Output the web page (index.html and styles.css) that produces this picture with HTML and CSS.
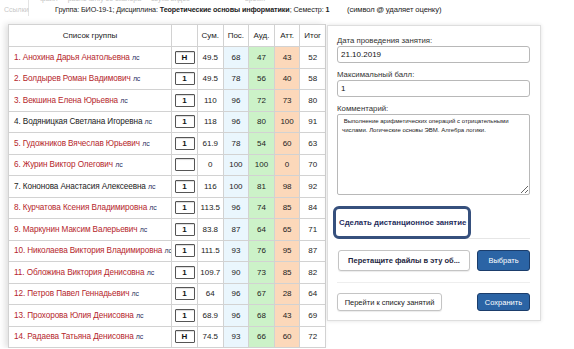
FILE: index.html
```html
<!DOCTYPE html>
<html lang="ru">

<head>
  <meta charset="UTF-8">
  <title>Журнал занятия</title>
  <link rel="stylesheet" href="styles.css">
</head>

<body>
  <div class="topbar">
    <div class="ribbon-group">Ссылки</div>
    <div class="ribbon-faded">
      <span>файл</span><span>распечатку со сканера</span><span>звука видео</span><span class="far">время</span>
    </div>
    <div class="info">
      Группа: БИО-19-1; Дисциплина: <b>Теоретические основы информатики</b>; Семестр: <b>1</b>
    </div>
    <div class="hint">(символ <b>@</b> удаляет оценку)</div>
  </div>

  <div class="main">
    <table class="journal">
      <thead>
        <tr>
          <th class="name-col">Список группы</th>
          <th class="mark-col"></th>
          <th>Сум.</th>
          <th>Пос.</th>
          <th>Ауд.</th>
          <th>Атт.</th>
          <th>Итог</th>
        </tr>
      </thead>
      <tbody id="rows"></tbody>
    </table>

    <div class="lesson-box">
      <label>Дата проведения занятия:</label>
      <input type="text" value="21.10.2019">

      <label>Максимальный балл:</label>
      <input type="text" value="1">

      <label>Комментарий:</label>
      <textarea> Выполнение арифметических операций с отрицательными числами. Логические основы ЭВМ. Алгебра логики.</textarea>

      <div class="remote-wrap">
        <button class="btn-remote">Сделать дистанционное занятие</button>
      </div>

      <div class="file-row">
        <button class="btn-plain btn-drop">Перетащите файлы в эту об...</button>
        <button class="btn-blue">Выбрать</button>
      </div>

      <div class="save-row">
        <button class="btn-plain btn-back">Перейти к списку занятий</button>
        <button class="btn-blue">Сохранить</button>
      </div>
    </div>
  </div>

  <script>
    const students = [
      ['1. Анохина Дарья Анатольевна', 'Н', '49.5', 68, 47, 43, 52, true],
      ['2. Болдырев Роман Вадимович', '1', '49.5', 78, 56, 40, 58, true],
      ['3. Векшина Елена Юрьевна', '1', '110', 96, 72, 73, 80, true],
      ['4. Водяницкая Светлана Игоревна', '1', '118', 96, 80, 100, 91, false],
      ['5. Гудожников Вячеслав Юрьевич', '1', '61.9', 78, 54, 60, 63, true],
      ['6. Журин Виктор Олегович', '', '0', 100, 100, 0, 70, true],
      ['7. Кононова Анастасия Алексеевна', '1', '116', 100, 81, 98, 92, false],
      ['8. Курчатова Ксения Владимировна', '1', '113.5', 96, 74, 85, 84, true],
      ['9. Маркунин Максим Валерьевич', '1', '83.8', 87, 64, 65, 71, true],
      ['10. Николаева Виктория Владимировна', '1', '111.5', 93, 76, 95, 87, true],
      ['11. Обложина Виктория Денисовна', '1', '109.7', 90, 73, 85, 82, true],
      ['12. Петров Павел Геннадьевич', '1', '64', 96, 67, 28, 64, true],
      ['13. Прохорова Юлия Денисовна', '1', '68.9', 96, 68, 43, 69, true],
      ['14. Радаева Татьяна Денисовна', 'Н', '74.5', 93, 66, 60, 72, true]
    ];

    const tbody = document.getElementById('rows');
    students.forEach(s => {
      const tr = document.createElement('tr');
      tr.innerHTML = `
        <td class="name-col ${s[7] ? 'red' : ''}">${s[0]} <span class="ls">лс</span></td>
        <td class="mark-col"><span class="mark">${s[1]}</span></td>
        <td>${s[2]}</td>
        <td class="pos">${s[3]}</td>
        <td class="aud">${s[4]}</td>
        <td class="att">${s[5]}</td>
        <td>${s[6]}</td>`;
      tbody.appendChild(tr);
    });
  </script>
</body>

</html>
```

FILE: styles.css
```css
body {
  margin: 0;
  background-color: #fff;
  color: #222;
  font-family: "Liberation Sans", Arial, sans-serif;
  font-size: 8px;
  overflow: hidden;
}

.topbar {
  position: relative;
  height: 24px;
}

.ribbon-group {
  position: absolute;
  left: 0;
  top: 0;
  width: 29px;
  height: 16px;
  padding: 6px 0 0 4px;
  box-sizing: border-box;
  border-right: 1px solid #e4e4e4;
  color: #c8c8c8;
  font-size: 7px;
}

.ribbon-faded {
  position: absolute;
  left: 40px;
  top: -5px;
  color: #c4c4c4;
  font-size: 7px;
  display: flex;
  gap: 10px;
}

.ribbon-faded .far {
  margin-left: 45px;
}

.info {
  position: absolute;
  left: 55px;
  top: 5px;
  color: #222;
  font-size: 7.2px;
  letter-spacing: -0.1px;
  white-space: nowrap;
}

.hint {
  position: absolute;
  left: 347px;
  top: 5px;
  color: #222;
  font-size: 7.6px;
  letter-spacing: -0.1px;
  white-space: nowrap;
}

.main {
  display: flex;
  align-items: flex-start;
  padding-left: 8px;
}

.journal {
  border-collapse: collapse;
  width: 318px;
  table-layout: fixed;
  box-shadow: -3px 0 6px rgba(0, 0, 0, 0.12);
}

.journal th,
.journal td {
  border: 1px solid #d2d2d2;
  height: 20.5px;
  padding: 0;
  text-align: center;
  font-weight: normal;
  font-size: 8px;
  white-space: nowrap;
  overflow: hidden;
}

.journal th {
  height: 21px;
}

.journal th.name-col {
  width: 162px;
  text-align: center;
}

.journal td.name-col {
  text-align: left;
  padding-left: 5px;
  font-size: 8.2px;
  letter-spacing: -0.1px;
}

.journal .mark-col {
  width: 25px;
  border-left-color: #cfe8ee;
}

.red {
  color: #b5262b;
}

.ls {
  color: #1f2d5c;
  font-size: 7px;
}

.mark {
  display: inline-block;
  width: 18px;
  height: 11px;
  line-height: 11px;
  border: 1px solid #555;
  border-radius: 1px;
  box-shadow: inset 0 1px 1px rgba(0, 0, 0, 0.15);
  font-weight: bold;
  color: #111;
  vertical-align: middle;
}

.pos {
  background-color: #eaf6fd;
}

.aud {
  background-color: #ccf2c8;
}

.att {
  background-color: #fcd8ba;
}

.lesson-box {
  width: 214px;
  margin-left: 1px;
  margin-top: 1px;
  padding: 10px 10px 9px 9px;
  box-sizing: border-box;
  background-color: #fff;
  border: 1px solid #dedede;
  box-shadow: 0 0 4px rgba(0, 0, 0, 0.12);
  display: flex;
  flex-direction: column;
}

.lesson-box label {
  color: #333;
  line-height: 9px;
  margin-bottom: 1px;
  font-size: 7.8px;
}

.lesson-box input {
  height: 17px;
  box-sizing: border-box;
  border: 1px solid #b8b8b8;
  border-radius: 3px;
  padding: 0 3px;
  font-family: inherit;
  font-size: 8px;
  color: #111;
  margin-bottom: 7px;
}

.lesson-box textarea {
  height: 81px;
  box-sizing: border-box;
  border: 1px solid #b8b8b8;
  border-radius: 2px;
  padding: 2px 4px;
  font-family: inherit;
  font-size: 6px;
  line-height: 9px;
  color: #222;
  resize: both;
}

.remote-wrap {
  margin-top: 11px;
  border-bottom: 1px solid #e6e6e6;
}

.btn-remote {
  width: 138px;
  height: 33px;
  margin-left: -4px;
  margin-bottom: -1px;
  text-align: left;
  padding-left: 3px;
  background-color: #fff;
  border: 3px solid #36507d;
  border-radius: 6px;
  color: #1f2d5c;
  font-family: inherit;
  font-size: 7.8px;
  font-weight: bold;
  white-space: nowrap;
}

.file-row,
.save-row {
  display: flex;
  justify-content: space-between;
  align-items: center;
}

.file-row {
  margin-top: 11px;
  padding-bottom: 11px;
  border-bottom: 1px solid #eeeeee;
}

.save-row {
  margin-top: 10px;
}

.btn-plain {
  background-color: #fff;
  border: 1px solid #c4c4c4;
  border-radius: 3px;
  box-shadow: 0 1px 1px rgba(0, 0, 0, 0.08);
  color: #222;
  font-family: inherit;
  font-size: 7.5px;
  white-space: nowrap;
  padding: 0;
}

.btn-drop {
  width: 132px;
  height: 21px;
  margin-left: 1px;
  font-weight: bold;
  color: #1d2540;
}

.btn-back {
  width: 105px;
  height: 18px;
}

.btn-blue {
  width: 53px;
  height: 21px;
  background-color: #2b64a5;
  border: 1px solid #1b3d6b;
  border-radius: 3px;
  color: #fff;
  font-family: inherit;
  font-size: 7.5px;
  padding: 0;
}

.save-row .btn-blue {
  height: 18px;
}
```
